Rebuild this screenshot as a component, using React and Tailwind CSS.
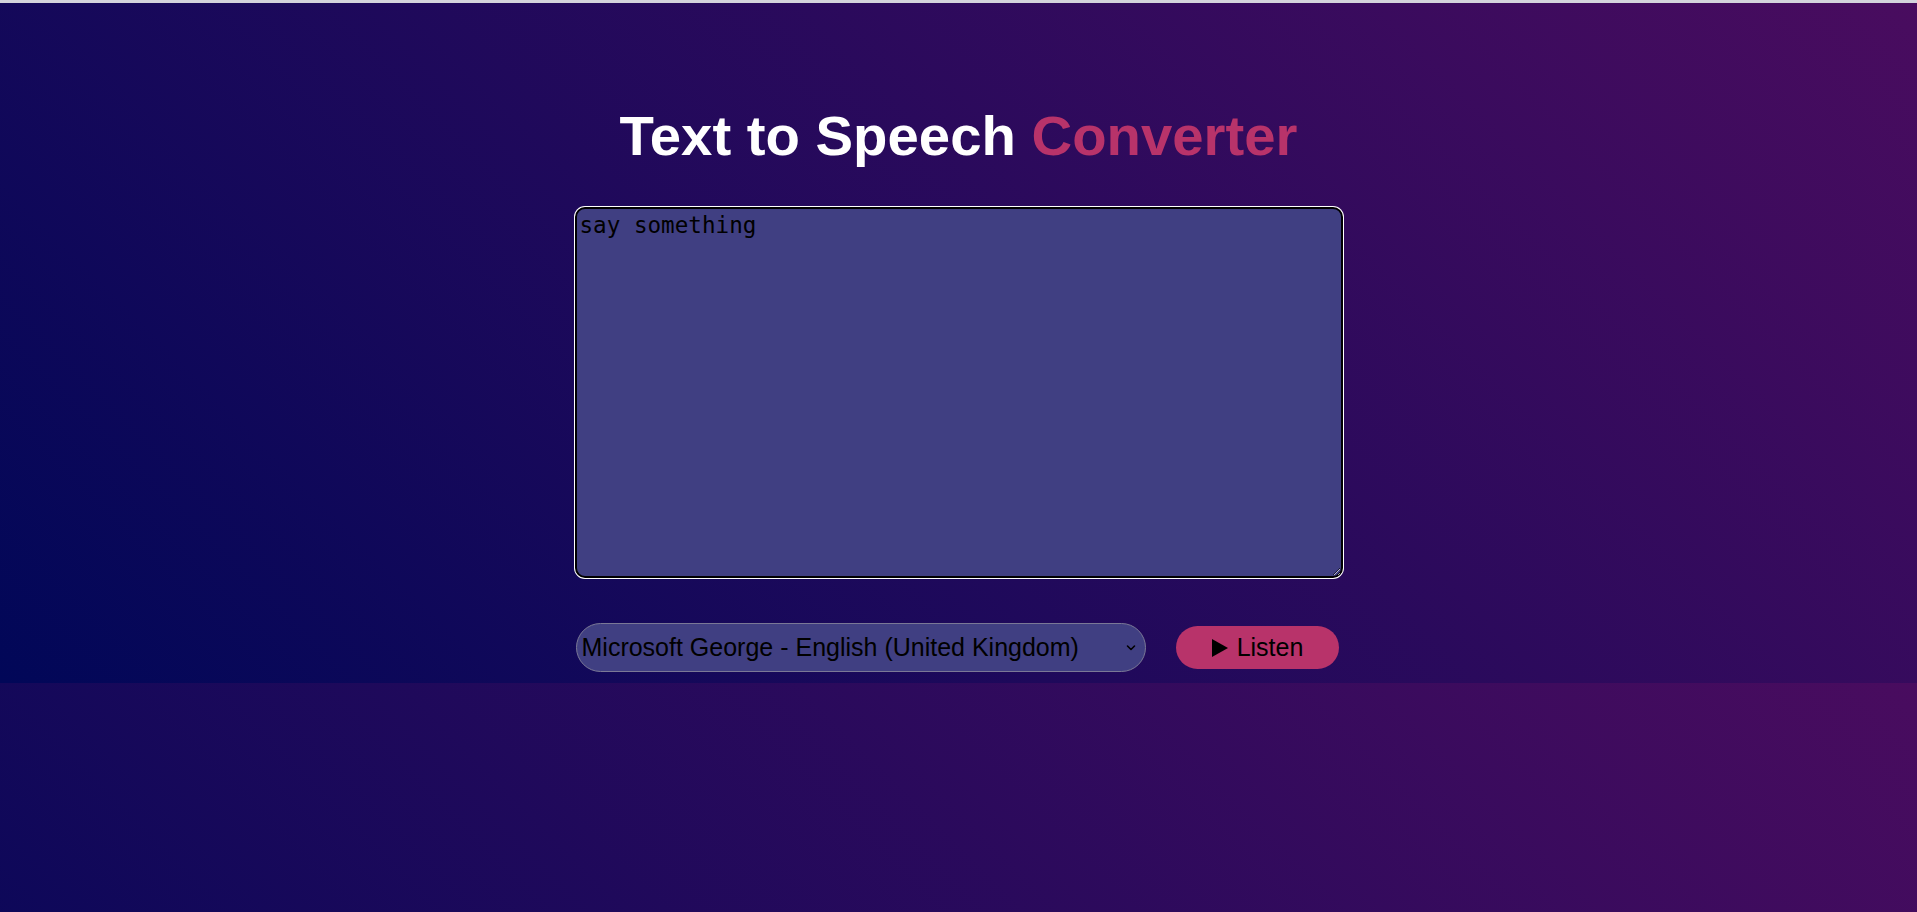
import React from "react";

export default function App() {
  return (
    <div className="w-full h-[912px] overflow-hidden flex flex-col bg-[#d4d4dc]" style={{ fontFamily: '"Liberation Sans", Arial, sans-serif' }}>
      <div className="h-[3px] shrink-0 bg-[#d4d4dc]" />
      <section className="h-[680px] shrink-0 flex flex-col items-center bg-[linear-gradient(45deg,#010758,#490c5f)]">
        <h1 className="mt-[101px] text-[56.3px] font-bold leading-[64px] text-white" style={{ fontFamily: '"Liberation Sans", Arial, sans-serif' }}>
          Text to Speech <span className="text-[#b8336a]">Converter</span>
        </h1>
        <textarea
          defaultValue="say something"
          className="mt-[39px] w-[768px] h-[371px] rounded-[10px] border-2 border-black shadow-[0_0_0_1px_#ffffff] bg-[#403f82] text-black text-[22.6px] leading-[27px] px-[3px] py-[3px] outline-none"
          style={{ fontFamily: '"DejaVu Sans Mono", "Liberation Mono", monospace' }}
        />
        <div className="mt-[45px] w-[770px] flex items-center gap-[30px] pl-[2px]">
          <div className="relative w-[570px] h-[49px]">
            <select
              className="appearance-none w-full h-full rounded-full border border-[#7a7896] bg-[#403f82] text-black text-[25px] pl-[5px] pr-[30px] outline-none"
              style={{ fontFamily: '"Liberation Sans", Arial, sans-serif' }}
              defaultValue="george"
            >
              <option value="george">Microsoft George - English (United Kingdom)</option>
            </select>
            <svg className="absolute right-[10px] top-1/2 -translate-y-1/2 pointer-events-none" width="10" height="7" viewBox="0 0 10 7">
              <path d="M1.5 1.5 L5 5 L8.5 1.5" fill="none" stroke="#000" strokeWidth="1.6" strokeLinecap="round" strokeLinejoin="round" />
            </svg>
          </div>
          <button className="w-[163px] h-[43px] rounded-full bg-[#b8336a] text-black text-[25px] flex items-center justify-center gap-[8px]" style={{ fontFamily: '"Liberation Sans", Arial, sans-serif' }}>
            <svg width="18" height="20" viewBox="0 0 18 20">
              <path d="M1 1 L17 10 L1 19 Z" fill="#000" />
            </svg>
            <span>Listen</span>
          </button>
        </div>
      </section>
      <div className="flex-1 bg-[linear-gradient(45deg,#010758,#490c5f)] bg-[length:100%_680px] bg-no-repeat bg-top" />
    </div>
  );
}
